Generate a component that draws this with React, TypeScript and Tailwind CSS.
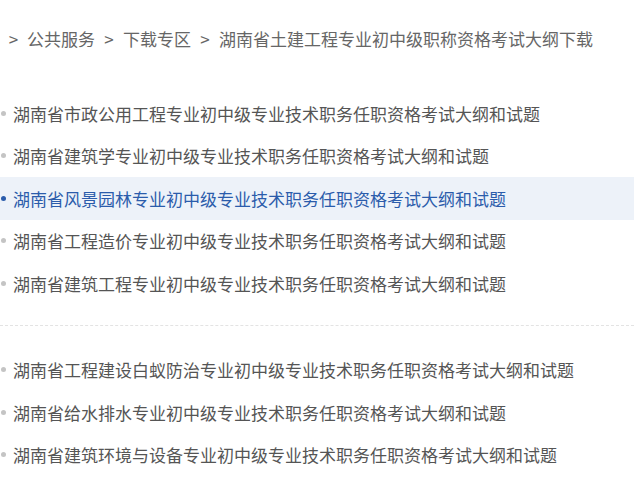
const GROUP_A = [
  '湖南省市政公用工程专业初中级专业技术职务任职资格考试大纲和试题',
  '湖南省建筑学专业初中级专业技术职务任职资格考试大纲和试题',
  '湖南省风景园林专业初中级专业技术职务任职资格考试大纲和试题',
  '湖南省工程造价专业初中级专业技术职务任职资格考试大纲和试题',
  '湖南省建筑工程专业初中级专业技术职务任职资格考试大纲和试题',
]

const GROUP_B = [
  '湖南省工程建设白蚁防治专业初中级专业技术职务任职资格考试大纲和试题',
  '湖南省给水排水专业初中级专业技术职务任职资格考试大纲和试题',
  '湖南省建筑环境与设备专业初中级专业技术职务任职资格考试大纲和试题',
]

const ACTIVE = '湖南省风景园林专业初中级专业技术职务任职资格考试大纲和试题'

function Row({ title }: { title: string }) {
  const active = title === ACTIVE
  return (
    <li className={`flex items-center h-[42.5px] ${active ? 'bg-[#edf2f9]' : ''}`}>
      <span
        className={`w-[5px] h-[5px] rounded-full ml-[1px] mr-[7px] shrink-0 ${active ? 'bg-[#2b5cab]' : 'bg-[#c4c4c4]'}`}
      />
      <a className={`whitespace-nowrap ${active ? 'text-[#2b5cab]' : 'text-[#555555]'}`}>{title}</a>
    </li>
  )
}

export default function App() {
  return (
    <div
      className="w-[634px] h-[483px] overflow-hidden bg-white text-[17px]"
      style={{ fontFamily: '"Noto Sans CJK SC", "Noto Sans", sans-serif' }}
    >
      {/* breadcrumb */}
      <div className="flex items-center h-[30px] mt-[24px] text-[#666666] whitespace-nowrap">
        <span className="w-[27px] text-center">&gt;</span>
        <span>公共服务</span>
        <span className="w-[28px] text-center">&gt;</span>
        <span>下载专区</span>
        <span className="w-[28px] text-center">&gt;</span>
        <span>湖南省土建工程专业初中级职称资格考试大纲下载</span>
      </div>

      <ul className="mt-[38px]">
        {GROUP_A.map(t => <Row key={t} title={t} />)}
      </ul>

      <div className="mt-[20px] border-t border-dashed border-[#e3e3e3]" />

      <ul className="mt-[23px]">
        {GROUP_B.map(t => <Row key={t} title={t} />)}
      </ul>
    </div>
  )
}
